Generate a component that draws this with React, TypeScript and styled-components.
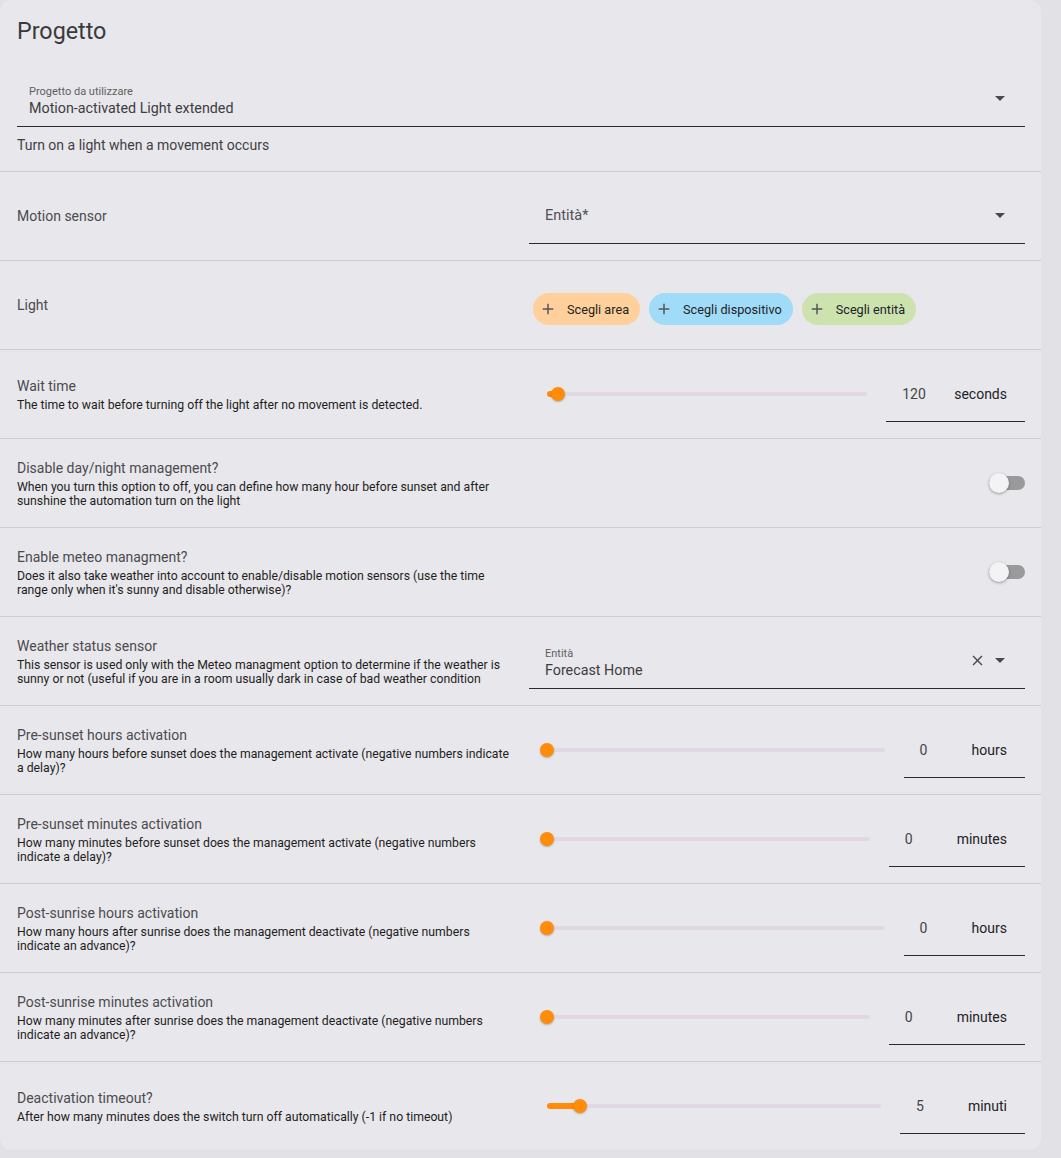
import React from "react";
import styled, { createGlobalStyle } from "styled-components";

const GlobalStyle = createGlobalStyle`
  html, body { margin: 0; padding: 0; background: #e2e1e6; }
  body { font-family: Roboto, "Noto Sans", "Liberation Sans", sans-serif; -webkit-font-smoothing: antialiased; }
  * { box-sizing: border-box; }
`;

const Card = styled.div`
  width: 1041px;
  background: #e8e7ec;
  border-radius: 12px;
  overflow: hidden;
`;

const Header = styled.h1`
  margin: 0;
  padding: 15px 16px 24px 17px;
  font-size: 23.3px;
  line-height: 32px;
  font-weight: 400;
  color: #3a3a3c;
`;

const TopSection = styled.div`
  padding: 0 16px 16px 17px;
`;

const Intro = styled.div`
  margin-top: 8px;
  font-size: 14px;
  line-height: 20px;
  color: #3f3f42;
`;

const Row = styled.div`
  display: grid;
  grid-template-columns: 1fr 1fr;
  column-gap: 16px;
  align-items: center;
  min-height: 89px;
  padding: 16px 16px 16px 17px;
  border-top: 1px solid #cdccd1;
`;

const Info = styled.div`
  display: flex;
  flex-direction: column;
`;

const Title = styled.div`
  font-size: 14px;
  line-height: 20px;
  color: #4b4b4e;
`;

const Desc = styled.div`
  margin-top: 2px;
  font-size: 12.25px;
  line-height: 14.5px;
  color: #1e1e20;
`;

const Field = styled.div<{ $padL: number }>`
  height: 56px;
  display: flex;
  align-items: center;
  padding: 0 20px 0 ${(p) => p.$padL}px;
  border-bottom: 1px solid #2b2b2d;
`;

const FieldText = styled.div`
  flex: 1;
  display: flex;
  flex-direction: column;
  padding-top: 6px;
`;

const FloatLabel = styled.div`
  font-size: 11px;
  line-height: 14px;
  color: #5f5f63;
`;

const FieldValue = styled.div`
  margin-top: -1px;
  font-size: 14.3px;
  line-height: 20px;
  color: #3d3d40;
`;

const Placeholder = styled.div`
  flex: 1;
  font-size: 14.5px;
  line-height: 20px;
  color: #505054;
`;

const Icons = styled.div`
  display: flex;
  align-items: center;
  gap: 9px;
`;

const Caret = styled.span`
  width: 0;
  height: 0;
  border-left: 5px solid transparent;
  border-right: 5px solid transparent;
  border-top: 5px solid #4a4a4d;
`;

const Chips = styled.div`
  display: flex;
  gap: 9px;
  padding: 8px 0 0 4px;
`;

const Chip = styled.div<{ $bg: string }>`
  height: 32px;
  border-radius: 16px;
  background: ${(p) => p.$bg};
  display: flex;
  align-items: center;
  padding: 0 11px 0 6px;
  gap: 10px;
  font-size: 12.7px;
  color: #222224;
  svg { flex: none; }
`;

const SliderLine = styled.div`
  display: flex;
  align-items: center;
`;

const Slider = styled.div`
  flex: 1;
  position: relative;
  height: 20px;
  margin: 0 19px 0 18px;
`;

const Track = styled.div`
  position: absolute;
  left: 0;
  right: 0;
  top: 8px;
  height: 4px;
  border-radius: 2px;
  background: #e0d8e3;
`;

const ActiveTrack = styled.div`
  position: absolute;
  left: 0;
  top: 7px;
  height: 6px;
  border-radius: 3px;
  background: #ff8c0a;
`;

const Thumb = styled.div`
  position: absolute;
  top: 3px;
  width: 14px;
  height: 14px;
  margin-left: -7px;
  border-radius: 50%;
  background: #ff8c0a;
  box-shadow: 0 1px 2px rgba(0, 0, 0, 0.25);
`;

const NumberField = styled.div`
  height: 56px;
  display: flex;
  align-items: center;
  padding: 0 18px 0 16px;
  border-bottom: 1px solid #2b2b2d;
`;

const NumberValue = styled.div`
  width: 52px;
  font-size: 14px;
  color: #444447;
`;

const Unit = styled.div`
  font-size: 14px;
  color: #222224;
`;

const SwitchWrap = styled.div`
  display: flex;
  justify-content: flex-end;
`;

const Switch = styled.div`
  position: relative;
  width: 36px;
  height: 20px;
`;

const SwitchTrack = styled.div`
  position: absolute;
  left: 0;
  right: 0;
  top: 3px;
  height: 14px;
  border-radius: 7px;
  background: #9a9a9d;
`;

const SwitchThumb = styled.div`
  position: absolute;
  left: 0;
  top: 0;
  width: 20px;
  height: 20px;
  border-radius: 50%;
  background: #f3f3f5;
  box-shadow: 0 1px 3px rgba(0, 0, 0, 0.35);
`;

const PlusIcon = () => (
  <svg width="18" height="18" viewBox="0 0 24 24">
    <path d="M19,13H13V19H11V13H5V11H11V5H13V11H19V13Z" fill="#56565a" />
  </svg>
);

const CloseIcon = () => (
  <svg width="17" height="17" viewBox="0 0 24 24">
    <path
      d="M19,6.41L17.59,5L12,10.59L6.41,5L5,6.41L10.59,12L5,17.59L6.41,19L12,13.41L17.59,19L19,17.59L13.41,12L19,6.41Z"
      fill="#4a4a4d"
    />
  </svg>
);

type Control =
  | { kind: "select"; label?: string; value?: string; placeholder?: string; clear?: boolean }
  | { kind: "chips" }
  | { kind: "slider"; value: number; min: number; max: number; unit: string }
  | { kind: "switch" };

type RowData = { title: string; desc?: string; control: Control };

const rows: RowData[] = [
  { title: "Motion sensor", control: { kind: "select", placeholder: "Entità*" } },
  { title: "Light", control: { kind: "chips" } },
  {
    title: "Wait time",
    desc: "The time to wait before turning off the light after no movement is detected.",
    control: { kind: "slider", value: 120, min: 0, max: 3600, unit: "seconds" },
  },
  {
    title: "Disable day/night management?",
    desc: "When you turn this option to off, you can define how many hour before sunset and after sunshine the automation turn on the light",
    control: { kind: "switch" },
  },
  {
    title: "Enable meteo managment?",
    desc: "Does it also take weather into account to enable/disable motion sensors (use the time range only when it's sunny and disable otherwise)?",
    control: { kind: "switch" },
  },
  {
    title: "Weather status sensor",
    desc: "This sensor is used only with the Meteo managment option to determine if the weather is sunny or not (useful if you are in a room usually dark in case of bad weather condition",
    control: { kind: "select", label: "Entità", value: "Forecast Home", clear: true },
  },
  {
    title: "Pre-sunset hours activation",
    desc: "How many hours before sunset does the management activate (negative numbers indicate a delay)?",
    control: { kind: "slider", value: 0, min: 0, max: 24, unit: "hours" },
  },
  {
    title: "Pre-sunset minutes activation",
    desc: "How many minutes before sunset does the management activate (negative numbers indicate a delay)?",
    control: { kind: "slider", value: 0, min: 0, max: 59, unit: "minutes" },
  },
  {
    title: "Post-sunrise hours activation",
    desc: "How many hours after sunrise does the management deactivate (negative numbers indicate an advance)?",
    control: { kind: "slider", value: 0, min: 0, max: 24, unit: "hours" },
  },
  {
    title: "Post-sunrise minutes activation",
    desc: "How many minutes after sunrise does the management deactivate (negative numbers indicate an advance)?",
    control: { kind: "slider", value: 0, min: 0, max: 59, unit: "minutes" },
  },
  {
    title: "Deactivation timeout?",
    desc: "After how many minutes does the switch turn off automatically (-1 if no timeout)",
    control: { kind: "slider", value: 5, min: -1, max: 60, unit: "minuti" },
  },
];

const SelectField: React.FC<{ padL: number; label?: string; value?: string; placeholder?: string; clear?: boolean }> = ({
  padL,
  label,
  value,
  placeholder,
  clear,
}) => (
  <Field $padL={padL}>
    {placeholder ? (
      <Placeholder>{placeholder}</Placeholder>
    ) : (
      <FieldText>
        <FloatLabel>{label}</FloatLabel>
        <FieldValue>{value}</FieldValue>
      </FieldText>
    )}
    <Icons>
      {clear && <CloseIcon />}
      <Caret />
    </Icons>
  </Field>
);

const renderControl = (c: Control) => {
  switch (c.kind) {
    case "select":
      return <SelectField padL={16} label={c.label} value={c.value} placeholder={c.placeholder} clear={c.clear} />;
    case "chips":
      return (
        <Chips>
          <Chip $bg="#ffd09b">
            <PlusIcon />
            Scegli area
          </Chip>
          <Chip $bg="#a0dcf8">
            <PlusIcon />
            Scegli dispositivo
          </Chip>
          <Chip $bg="#cce3b0">
            <PlusIcon />
            Scegli entità
          </Chip>
        </Chips>
      );
    case "slider": {
      const pct = ((c.value - c.min) / (c.max - c.min)) * 100;
      return (
        <SliderLine>
          <Slider>
            <Track />
            <ActiveTrack style={{ width: `${pct}%` }} />
            <Thumb style={{ left: `${pct}%` }} />
          </Slider>
          <NumberField>
            <NumberValue>{c.value}</NumberValue>
            <Unit>{c.unit}</Unit>
          </NumberField>
        </SliderLine>
      );
    }
    case "switch":
      return (
        <SwitchWrap>
          <Switch>
            <SwitchTrack />
            <SwitchThumb />
          </Switch>
        </SwitchWrap>
      );
  }
};

export default function App() {
  return (
    <>
      <GlobalStyle />
      <Card>
        <Header>Progetto</Header>
        <TopSection>
          <SelectField padL={12} label="Progetto da utilizzare" value="Motion-activated Light extended" />
          <Intro>Turn on a light when a movement occurs</Intro>
        </TopSection>
        {rows.map((r) => (
          <Row key={r.title}>
            <Info>
              <Title>{r.title}</Title>
              {r.desc && <Desc>{r.desc}</Desc>}
            </Info>
            <div>{renderControl(r.control)}</div>
          </Row>
        ))}
      </Card>
    </>
  );
}
